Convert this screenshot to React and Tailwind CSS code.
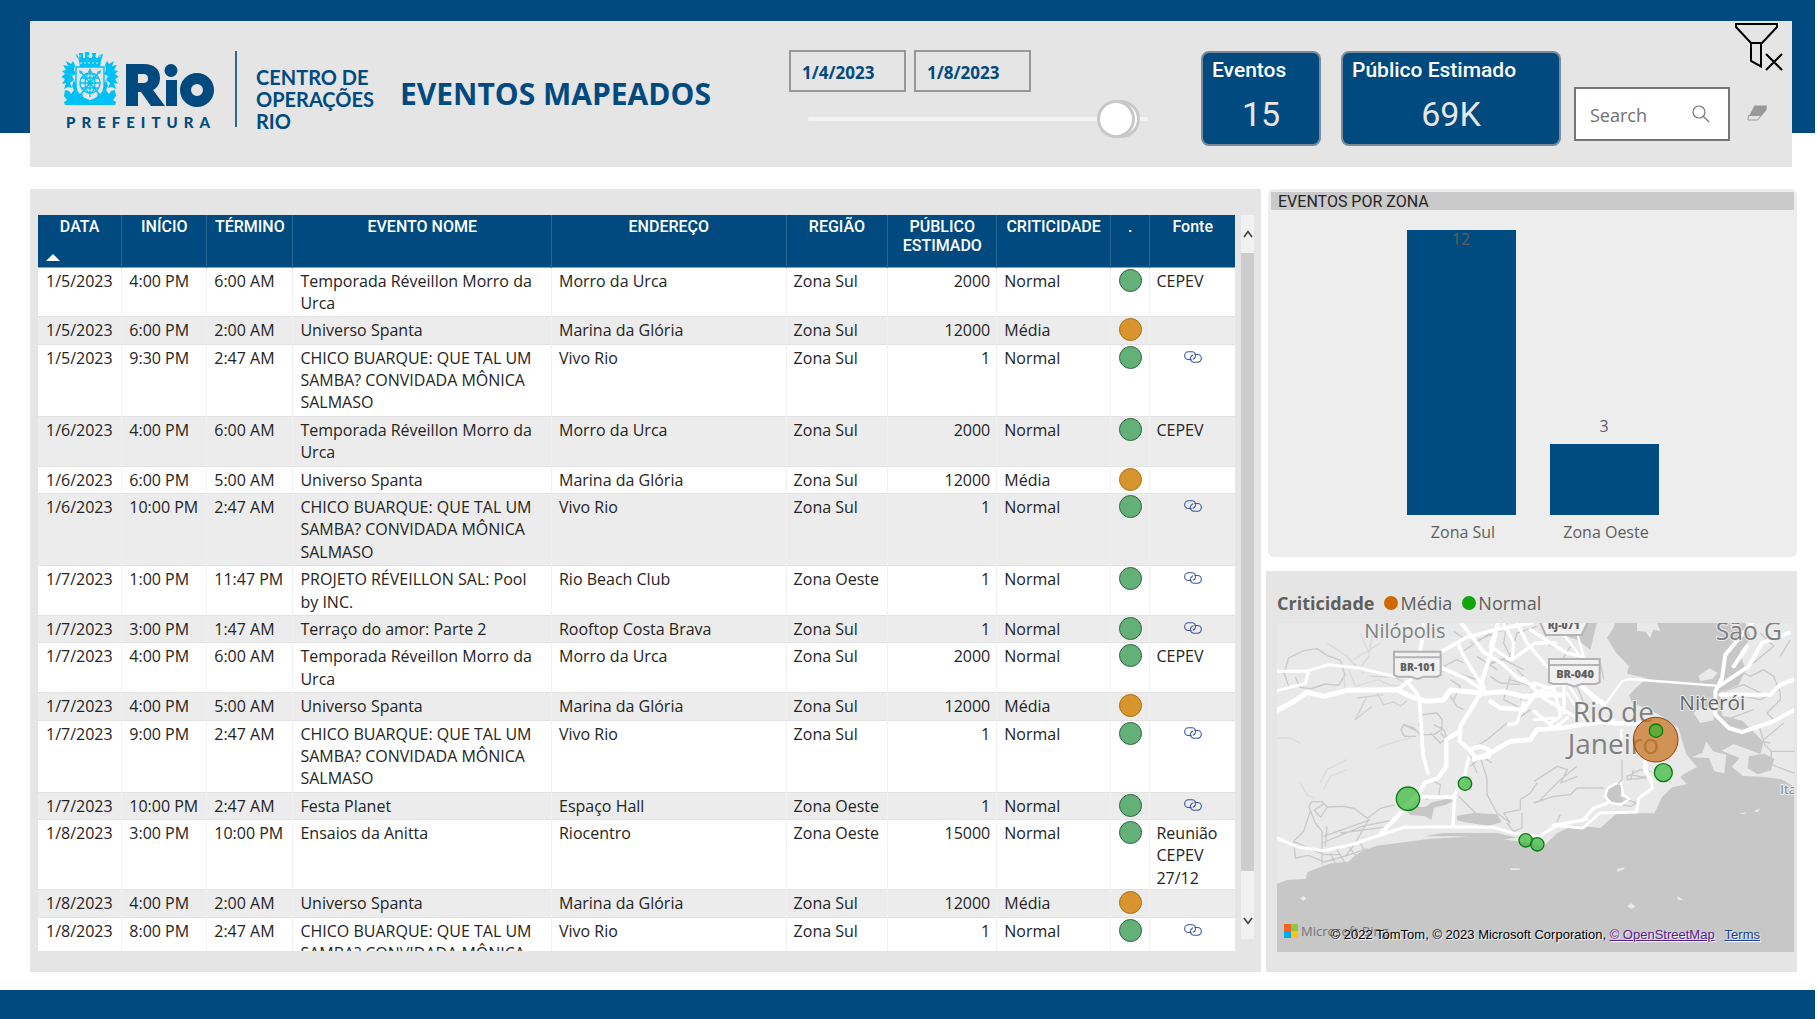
import React, { useState } from "react";

const NAMES = {
  reveillon: "Temporada Réveillon Morro da Urca",
  chico: "CHICO BUARQUE: QUE TAL UM SAMBA? CONVIDADA MÔNICA SALMASO",
};

const EVENTS = [
  ["1/5/2023", "4:00 PM", "6:00 AM", NAMES.reveillon, "Morro da Urca", "Zona Sul", 2000, "Normal", "CEPEV"],
  ["1/5/2023", "6:00 PM", "2:00 AM", "Universo Spanta", "Marina da Glória", "Zona Sul", 12000, "Média", ""],
  ["1/5/2023", "9:30 PM", "2:47 AM", NAMES.chico, "Vivo Rio", "Zona Sul", 1, "Normal", "link"],
  ["1/6/2023", "4:00 PM", "6:00 AM", NAMES.reveillon, "Morro da Urca", "Zona Sul", 2000, "Normal", "CEPEV"],
  ["1/6/2023", "6:00 PM", "5:00 AM", "Universo Spanta", "Marina da Glória", "Zona Sul", 12000, "Média", ""],
  ["1/6/2023", "10:00 PM", "2:47 AM", NAMES.chico, "Vivo Rio", "Zona Sul", 1, "Normal", "link"],
  ["1/7/2023", "1:00 PM", "11:47 PM", "PROJETO RÉVEILLON SAL: Pool by INC.", "Rio Beach Club", "Zona Oeste", 1, "Normal", "link"],
  ["1/7/2023", "3:00 PM", "1:47 AM", "Terraço do amor: Parte 2", "Rooftop Costa Brava", "Zona Sul", 1, "Normal", "link"],
  ["1/7/2023", "4:00 PM", "6:00 AM", NAMES.reveillon, "Morro da Urca", "Zona Sul", 2000, "Normal", "CEPEV"],
  ["1/7/2023", "4:00 PM", "5:00 AM", "Universo Spanta", "Marina da Glória", "Zona Sul", 12000, "Média", ""],
  ["1/7/2023", "9:00 PM", "2:47 AM", NAMES.chico, "Vivo Rio", "Zona Sul", 1, "Normal", "link"],
  ["1/7/2023", "10:00 PM", "2:47 AM", "Festa Planet", "Espaço Hall", "Zona Oeste", 1, "Normal", "link"],
  ["1/8/2023", "3:00 PM", "10:00 PM", "Ensaios da Anitta", "Riocentro", "Zona Oeste", 15000, "Normal", "Reunião CEPEV 27/12"],
  ["1/8/2023", "4:00 PM", "2:00 AM", "Universo Spanta", "Marina da Glória", "Zona Sul", 12000, "Média", ""],
  ["1/8/2023", "8:00 PM", "2:47 AM", NAMES.chico, "Vivo Rio", "Zona Sul", 1, "Normal", "link"],
];

const COLUMNS = [
  ["DATA", "w-[7%]"],
  ["INÍCIO", "w-[7.1%]"],
  ["TÉRMINO", "w-[7.2%]"],
  ["EVENTO NOME", "w-[21.6%]"],
  ["ENDEREÇO", "w-[19.6%]"],
  ["REGIÃO", "w-[8.5%]"],
  ["PÚBLICO ESTIMADO", "w-[9.1%]"],
  ["CRITICIDADE", "w-[9.5%]"],
  [".", "w-[3.3%]"],
  ["Fonte", "w-[7.1%]"],
];

const ZONES = [
  { name: "Zona Sul", total: 12 },
  { name: "Zona Oeste", total: 3 },
];

function Emblem() {
  return (
    <svg viewBox="0 0 56 54" className="h-[54px] w-14" aria-hidden="true">
      <g fill="#00c0f5">
        <path d="M15 3l2 7 1 6h20l1-6 2-7-4 1-1 3h-2V2h-4v5h-3V1h-4v6h-2V2h-4v5h-2l-1-3z" />
        <path d="M1 14l5 1-2-5 5 3 2-3 2 4-1 5 2 4-4 2 2 4-4 3 2 5-4-1-4 2 2-6-4 1 3-5-4-2 4-3-3-3 4-1z" />
        <path d="M55 14l-5 1 2-5-5 3-2-3-2 4 1 5-2 4 4 2-2 4 4 3-2 5 4-1 4 2-2-6 4 1-3-5 4-2-4-3 3-3-4-1z" />
        <path d="M12 29l3 6-1 5 6 5 6 3 2 3v3H3l-1-3 3-2-3-4 1-6 4 1 2 3 3-4-2-4z" />
        <path d="M44 29l-3 6 1 5-6 5-6 3-2 3v3h25l1-3-3-2 3-4-1-6-4 1-2 3-3-4 2-4z" />
      </g>
      <path d="M17 5h22M18 12h20" stroke="#e5e5e5" strokeWidth="1" strokeDasharray="2 2" />
      <path d="M14 16h28v20c0 7-6 11-14 14-8-3-14-7-14-14z" fill="#e5e5e5" stroke="#00c0f5" strokeWidth="1.4" />
      <g fill="none" stroke="#00c0f5" strokeWidth="1.3">
        <circle cx="28" cy="32" r="10" />
        <ellipse cx="28" cy="32" rx="5" ry="10" />
        <path d="M18 32h20M20 27h16M20 37h16M28 19v27M19 21l18 22M37 21L19 43" />
      </g>
      <path d="M28 17l2 4h-4zM17 19l4 2-3 2zM39 19l-4 2 3 2zM17 44l3-3 1 4zM39 44l-3-3-1 4z" fill="#00c0f5" />
      <circle cx="28" cy="32" r="2.6" fill="#00c0f5" />
    </svg>
  );
}

function Logo() {
  return (
    <div className="flex items-start text-[#004a80]">
      <div className="w-[152px]">
        <div className="flex h-14 items-start gap-2">
          <Emblem />
          <svg viewBox="0 0 88 44" className="mt-3 h-11 w-[88px]" role="img" aria-label="Rio">
            <path
              fillRule="evenodd"
              fill="#004a80"
              d="M0 1h18c10 0 16 5 16 14 0 6-3 10-7 12l12 16H25L15 29h-3v14H0zM12 11v9h5c3 0 5-1 5-4.500s-2-4.500-5-4.500z"
            />
            <circle cx="45" cy="7.500" r="6.500" fill="#004a80" />
            <path d="M40 17h11v26H40z" fill="#004a80" />
            <circle cx="71" cy="27" r="11.500" fill="none" stroke="#004a80" strokeWidth="11" />
          </svg>
        </div>
        <div className="pl-1 font-['Lato',sans-serif] text-[15px] leading-[30px] font-black tracking-[6px]">PREFEITURA</div>
      </div>
      <div className="ml-[21px] h-[76px] w-[2px] bg-[#2f6791]" />
      <div className="ml-[19px] pt-[15px] font-['Lato',sans-serif] text-[20px] leading-[22px] font-bold">
        CENTRO DE
        <br />
        OPERAÇÕES
        <br />
        RIO
      </div>
    </div>
  );
}

const RANGE =
  "pointer-events-none h-[38px] w-full appearance-none bg-transparent [&::-webkit-slider-thumb]:pointer-events-auto [&::-webkit-slider-thumb]:h-[38px] [&::-webkit-slider-thumb]:w-[38px] [&::-webkit-slider-thumb]:appearance-none [&::-webkit-slider-thumb]:rounded-full [&::-webkit-slider-thumb]:border-[3px] [&::-webkit-slider-thumb]:border-[#c8c8c8] [&::-webkit-slider-thumb]:bg-white";

function DateSlicer() {
  const [start, setStart] = useState("1/4/2023");
  const [end, setEnd] = useState("1/8/2023");
  const box =
    "h-[42px] w-[117px] border-2 border-[#979797] bg-transparent px-[11px] pt-[2px] text-[17px] font-bold text-[#004a80] outline-none";
  return (
    <div className="-mt-px w-[359px]">
      <div className="flex gap-2">
        <input aria-label="Data inicial" className={box} value={start} onChange={(e) => setStart(e.target.value)} />
        <input aria-label="Data final" className={box} value={end} onChange={(e) => setEnd(e.target.value)} />
      </div>
      <div className="relative mt-2 ml-[19px] flex h-[38px] items-center">
        <div className="h-1 w-full rounded-full bg-[#f3f2f1]" />
        <input type="range" aria-label="Fim do período" min="0" max="1000" defaultValue="972" className={`absolute inset-0 ${RANGE}`} />
        <input type="range" aria-label="Início do período" min="0" max="1000" defaultValue="958" className={`absolute inset-0 ${RANGE}`} />
      </div>
    </div>
  );
}

function Kpi({ label, value, width }) {
  return (
    <div
      className={`${width} h-[95px] rounded-lg border-2 border-[#7d8b98] bg-[#004a80] font-['Roboto',sans-serif] text-white`}
    >
      <div className="px-[9px] pt-[3px] text-[21px] leading-7 font-medium">{label}</div>
      <div className="pt-2 text-center text-[34px] leading-[44px] text-[#e6e6e6]">{value}</div>
    </div>
  );
}

function Header() {
  return (
    <header className="mr-[23px] ml-[30px] flex h-[146px] bg-[#e5e5e5] pt-[30px] pl-8">
      <Logo />
      <h1 className="ml-[26px] pt-7 text-[30px] leading-none font-bold whitespace-nowrap text-[#004a80]">EVENTOS MAPEADOS</h1>
      <div className="flex-1" />
      <DateSlicer />
      <div className="ml-[53px] flex gap-5">
        <Kpi label="Eventos" value="15" width="w-[120px]" />
        <Kpi label="Público Estimado" value="69K" width="w-[220px]" />
      </div>
      <label className="mt-9 ml-[13px] flex h-[54px] w-[156px] items-center border-2 border-[#767676] bg-white pr-[18px] pl-[14px]">
        <input type="search" aria-label="Search" placeholder="Search" className="w-full min-w-0 pt-[3px] text-[18px] outline-none placeholder:text-[#707070]" />
        <svg viewBox="0 0 18 18" className="h-[18px] w-[18px] shrink-0" fill="none" stroke="#777" strokeWidth="1.200">
          <circle cx="7" cy="7" r="6" />
          <path d="M11.500 11.500L17 17" />
        </svg>
      </label>
      <div className="-mt-7 mr-2 ml-1 flex w-[50px] flex-col">
        <button type="button" aria-label="Limpar filtros" className="h-[50px] w-[50px]">
          <svg viewBox="0 0 50 50" className="h-[50px] w-[50px]" fill="none" stroke="#000" strokeWidth="2">
            <path d="M2 1h41v3L28 20H17L2 4zM17 20v18l10 5.500V20" />
            <path d="M32 31l16 16M48 31L32 47" />
          </svg>
        </button>
        <button type="button" aria-label="Limpar pesquisa" className="mt-8 ml-[13px] h-4 w-5">
          <svg viewBox="0 0 20 16" className="h-4 w-5">
            <path d="M7.500.5H20l-.5 4.500-6 7H1.500z" fill="#999" />
            <path d="M1.500 10.500h10.500l1.500 1-3 3.500H1z" fill="#e5e5e5" stroke="#999" />
          </svg>
        </button>
      </div>
    </header>
  );
}

function LinkIcon() {
  return (
    <svg viewBox="0 0 18 12" className="mx-auto mt-1 h-3 w-[18px]" fill="none" stroke="#3a55a0" strokeWidth="1.100">
      <path d="M7.500 8.500H4.500A3.800 3.800 0 0 1 4.500.8h3.500a3.600 3.600 0 0 1 3.300 5.200c-.5 1.200-1.500 2-2.600 2.300" />
      <path d="M10.500 3.500h3A3.800 3.800 0 0 1 13.500 11.200h-3.500a3.600 3.600 0 0 1-3.300-5.200c.5-1.200 1.500-2 2.600-2.300" />
    </svg>
  );
}

function EventRow({ event }) {
  const [date, start, end, name, address, region, people, level, source] = event;
  const cell = "border-r border-[#f1f1f1] pr-[6px] pt-[2px] pb-[2px]";
  return (
    <tr className="border-b border-[#e3e3e3] bg-white align-top even:bg-[#ececec]">
      <td className={`${cell} pl-2 whitespace-nowrap`}>{date}</td>
      <td className={`${cell} pl-[7px] whitespace-nowrap`}>{start}</td>
      <td className={`${cell} pl-[7px] whitespace-nowrap`}>{end}</td>
      <td className={`${cell} pl-[7px]`}>{name}</td>
      <td className={`${cell} pl-[7px]`}>{address}</td>
      <td className={`${cell} pl-[7px] whitespace-nowrap`}>{region}</td>
      <td className={`${cell} text-right`}>{people}</td>
      <td className={`${cell} pl-[7px]`}>{level}</td>
      <td className="border-r border-[#f1f1f1] p-0 pt-px">
        <div
          className={`mx-auto h-[23px] w-[23px] rounded-full border ${
            level === "Média" ? "border-[#a86f14] bg-[#d8952e]" : "border-[#2f6340] bg-[#64b079]"
          }`}
        />
      </td>
      <td className="px-[6px] pt-[2px]">
        {source === "link" ? (
          <a href="#fonte" aria-label="Abrir fonte" className="block">
            <LinkIcon />
          </a>
        ) : (
          source
        )}
      </td>
    </tr>
  );
}

function EventTable() {
  return (
    <section className="flex min-h-0 bg-[#e5e5e5] pt-[26px] pr-[7px] pb-[21px] pl-2">
      <div className="min-h-0 flex-1 overflow-hidden">
        <table className="w-full table-fixed border-collapse text-[16px] leading-[1.4] text-[#252423]">
          <thead>
            <tr className="h-[52px] border-b border-[#7ea3c0] bg-[#004a80] align-top font-['Roboto',sans-serif] text-[16px] leading-[19px] text-white">
              {COLUMNS.map(([title, width], i) => (
                <th key={title} scope="col" className={`${width} border-r border-[#2a6693] px-1 pt-[2px] font-medium last:border-r-0`}>
                  {title}
                  {i === 0 && (
                    <svg viewBox="0 0 14 7" className="mt-[18px] ml-1 h-[7px] w-[14px]" aria-hidden="true">
                      <path d="M7 0l7 7H0z" fill="#fff" />
                    </svg>
                  )}
                </th>
              ))}
            </tr>
          </thead>
          <tbody>
            {EVENTS.map((event, i) => (
              <EventRow key={i} event={event} />
            ))}
          </tbody>
        </table>
      </div>
      <div className="mb-3 ml-[6px] flex w-[13px] flex-col bg-[#f1f1f1]">
        <button type="button" aria-label="Rolar para cima" className="flex h-[38px] items-center justify-center">
          <svg viewBox="0 0 10 8" className="h-2 w-[10px]" fill="none" stroke="#404040" strokeWidth="1.600">
            <path d="M1 7l4-5.500L9 7" />
          </svg>
        </button>
        <div className="flex-1">
          <div className="h-[95%] bg-[#cdcdcd]" />
        </div>
        <button type="button" aria-label="Rolar para baixo" className="flex h-9 items-center justify-center">
          <svg viewBox="0 0 10 8" className="h-2 w-[10px]" fill="none" stroke="#404040" strokeWidth="1.600">
            <path d="M1 1l4 5.500L9 1" />
          </svg>
        </button>
      </div>
    </section>
  );
}

function ZoneChart() {
  const max = 12;
  return (
    <section className="ml-[2px] flex h-[368px] flex-col rounded-md bg-[#ededed] px-[3px] pt-[3px]">
      <h2 className="bg-[#cacaca] pt-px pl-[7px] font-['Roboto',sans-serif] text-[16px] leading-[17px] text-[#252423]">EVENTOS POR ZONA</h2>
      <div className="mt-5 flex flex-1 justify-center gap-[34px] text-[16px] text-[#605e5c]">
        {ZONES.map((zone) => (
          <div key={zone.name} className="flex w-[109px] flex-col">
            <div className="flex h-[285px] flex-col justify-end">
              {zone.total !== max && <span className="pb-1 text-center leading-7">{zone.total}</span>}
              <div className="bg-[#004c80] text-center leading-[18px]" style={{ height: `${(zone.total / max) * 100}%` }}>
                {zone.total === max && zone.total}
              </div>
            </div>
            <span className="pt-[7px] pl-1 text-center leading-5">{zone.name}</span>
          </div>
        ))}
      </div>
    </section>
  );
}

function MapDrawing() {
  return (
    <svg viewBox="0 0 1551 987" preserveAspectRatio="xMidYMid slice" className="h-full w-full font-['Open_Sans',sans-serif]" role="img" aria-label="Mapa do Rio de Janeiro">
      <rect width="1551" height="987" fill="#e9e9e9" />
      <g fill="#c7c7c7">
        <path d="M0 782l30-11 55-3 7-20 30-13 40-14 52-5 22-20 26-14 38-14 80-10 80-11 100-5 100 4 60 9 80 14 40-38 50-24 80 8 50-44 112 0 24-50 30-28 44-9-20-22 12-10 38-20-32-38-24-80-60-40-80-36-8-22 24-24 30-26-60-14 6-22-40-42-26-44 20-30 8-30h380l24 60-34 44 8 24 10 30-22 44-54 22 6 70 60 15 30 30 34 34-10 36-80-30-36 20 54 22-24 26 34 28 56 2 60 8 40 24 42 28 40-16v487H0z" />
        <path d="M385 560l25-8 35 0 20-14 45-10 25 4-30 14-34 8-8 38-18-12-45-4zM540 578l50-8 70 4 14 24-40 10-70-10-24-6zM990 500l30-14 20 0-10 30 12 20-30 6-20-12zM1416 400l46-8 30 16-10 34-40 12-30-18zM440 640l60-10 160 0 60 14-50 6-120-10z" />
        <path d="M870 0h90l-10 40-10 40-40-30-30-10z" />
      </g>
      <g fill="#e9e9e9">
        <path d="M1080 0h60l10 24-22-4-8 26-14-20-26-2zM1264 158l34-22 24 14-16 18-36 6zM1250 270l24-22 36 14 0 30-40 8zM1288 355l20 30 40 10-6 56-30-6-16-40-50-2 30-14zM1020 738l24-6-6 8-18 6zM1200 818l18 12-14 2zM1050 850l12-9 14 9-12 8zM1386 572l24-4-8 6zM1430 564l20-8-8 12zM70 826l10-8 8 10-10 6zM700 736h28v5h-28z" />
        <path d="M975 168l20-24 22 6-18 12 16 24-44 10zM1164 440l32 0-16 12z" />
      </g>
      <g fill="none" stroke="#c9c9c9" strokeWidth="4" strokeLinejoin="round">
        <path d="M35 190l-14-40 14-45 45-22 40-6 30 20 40 15 14 45-20 30-40-4-40 14-35-4-14-30" />
        <path d="M200 150l4 45M215 140l20 50 40-12 30-8 30 15 50 5M205 95l40 45 30-40 10-60 40-40M230 110l80-50M250 30l26 60M150 60l60 40 50 50" stroke="#dadada" />
        <path d="M280 160l70 2 30 15M300 210l20 35 30-8 20 12 20-15M320 215l-80 10M270 220l-35 70 50-40" stroke="#d2d2d2" />
        <path d="M425 310l10-35 45-5 15 20 0 30-25 15-40 0-20-20-30-10-8 15 10 20 35 0M470 305l30 15 10 25-20 15-30-30M490 330l25 25M380 305l40 20" />
        <path d="M520 170l30 20-20 40M500 130l40-20 20 10M520 220l20 30 20 10" />
        <path d="M0 345l40 0 30 16M300 375l60-20 40-10M130 480l20-40 60-30M140 500l20-40 50-20M70 480l20 35 20 10" stroke="#dcdcdc" />
        <path d="M95 550l10-14 30 0 16 16 50-2 30 6 40 30 40-30 40-10M95 550l20 50 20 25 0 90M151 552l-20 30-20-20 30-20M135 625l0 100M100 565l-20 60-30 30 5 50 40-8 46 20 70-20 60-20M135 660l120-50 100-20M140 640l140-50M190 630l150-20M50 655l90 40 50 0M150 610l-5 60M275 590l-40 70-30 40M215 670l30 40M250 660l20 40M180 680l30 50M160 690l20 40" />
        <path d="M430 490l40-15 20 10-5 35-40 8M610 405l20 60 0 50 30 55 40 30-20-30 50-10 0-30 30-20 20-30M580 400l20 50M580 430l35-30 30 20M545 520l50 50 30 10M690 600l20 25 25-10 0-45" />
        <path d="M560 45l-30-20M580 60l100-40M690 0l-10 60 20 40-60 20M620 130l60-20 60 30M640 30l-90 60M600 100l60 40M540 150l60 20M700 100l20-70 60-20M720 140l60 60-50 30M700 160l-20 70 60 30M690 300l-60 50-40 25M720 290l40-30M700 170l60 20M640 160l30 20 60 5" />
        <path d="M771 475l70-45 30 10-20 40 50-20M790 530l60-60 50-40M770 540l60-20 50-5 20-20 80 0M850 575l-10 20M1035 410l0 60-20 20M1050 460l40-20 30 5-20 20-50 5zM1060 455l50 10M1070 440l-10 30M1020 520l60 20-20 10-30-5" />
        <path d="M980 170l-10-50-60-10M950 180l-30-30-30 10M920 240l-20-50-60-40M850 120l30-50M800 60l60 20" />
        <path d="M1380 140l40 20 40-20 30 20 20 50 0 20-40 40 20 20M1340 205l60-20 60 30 40-10M1360 260l40-40 50 10 40-20M1350 290l80-30M1450 30l40 40-60 50-80 30M1460 350l60-50M1448 315l15 50 20 20 0 40 68 25M1480 385l71 0M1420 350l60 10M1510 100l30-50" />
      </g>
      <g fill="none" stroke="#fff" strokeLinejoin="round" strokeLinecap="round">
        <path strokeWidth="9" d="M0 145h85l70-20 90 10 110 26M95 143l-10 38-85 22M0 645l60 26 80 12 90-20 90-30 60-20 150-2 120 2 60 18 80 10" />
        <path strokeWidth="15" d="M0 262l50-26 40-28 50 12 70-18 150-2 40 20 50 15 50-4 20-30 100 10 60-5 60 15 50-5 60 0" />
        <path strokeWidth="11" d="M390 175l25 30 12 20 6 90 5 80 15 55M360 200l40-28M430 80l6-30 4-50M495 135l70 30 50 35M495 85l70-40 90-25 110-20M545 65l15 35 60 95M553 0l70 90 50 30 50 45 48 25" />
        <path strokeWidth="13" d="M620 195l-30 50-40 65-2 45 30 25 30-10 28 10 0 20-40 5-18-25M548 325l-40 25 0 80-25 35-40 15-20 35-110 115M620 205l-5-30 28-90 20-85M640 235l30 20 70 5 36-50 60 0" />
        <path strokeWidth="14" d="M590 410l50-20 60-35 60-5 20-30 80-6 50-8 60-10 50 5 70 0" />
        <path strokeWidth="10" d="M575 405l-12 50-30 60-5 90M430 522h105M680 0l30 60-5 50 70-50 60 0M720 0l30 60 60 70 90 50 80 60M700 110l-60-40 20-60M771 180l60 20 20 80-30 20M771 210l90-30 0 90M771 265l60 50 40-30M740 240l-20 60-25 5M760 20l60 40 50 30 46 10M740 165l60 60 100 60" />
        <path strokeWidth="7" d="M830 0l50 60 30 40M900 30l20 70M870 180l60 90M920 190l60 60 15-20M995 230l40-55 20-7 80 6 180 14M910 190l50 50M870 210l50 80 90 0M1033 320l0 70M1033 480l5 35 20 12-25 18-30-5-20-20 10-25 26-14" />
        <path strokeWidth="14" d="M1105 410l0 30 16 30" />
        <path strokeWidth="9" d="M1121 470l5 25-40 30-8 42-110 3-50 45-90-8 90-15 30-35 50-20M781 642l60-35 90-20M771 290l60-5" />
        <path strokeWidth="12" d="M1315 205l20-40 10-70 50-60 30-35M1325 190l90-60 40-70 80-30M1315 205l0 70 40 40 40 12 90-30 66-35M1330 215l150 0 30-30 40-15M1370 130l40-60" />
      </g>
      <g className="fill-[#808080] stroke-[#ececec] [paint-order:stroke] [stroke-width:6px]" fontWeight="500">
        <text x="262" y="46" fontSize="60">Nilópolis</text>
        <text x="1316" y="50" fontSize="74">São G</text>
        <text x="887" y="298" fontSize="84">Rio de</text>
        <text x="872" y="392" fontSize="84">Janeiro</text>
        <text x="1207" y="260" fontSize="62" className="fill-[#666]">Niterói</text>
        <text x="1510" y="514" fontSize="40">Ita</text>
      </g>
      <g fill="#f1f1f1" stroke="#b3b3b3" strokeWidth="6">
        <path d="M351 86h140v70l-10 5h-40l-20 7-20-7h-40l-10-5zM351 103h140" />
        <path d="M816 108h152v70l-12 5h-42l-22 7-22-7h-42l-12-5zM816 126h152" />
        <path d="M786-10l20 46h108l22-46z" />
      </g>
      <g fill="#606060" fontWeight="800" fontSize="31" textAnchor="middle">
        <text x="422" y="144">BR-101</text>
        <text x="894" y="165" fontSize="33">BR-040</text>
        <text x="860" y="18">RJ-071</text>
      </g>
      <circle cx="1136" cy="350" r="67" fill="#c8721c" fillOpacity="0.72" stroke="#9a3c0a" strokeWidth="3" />
      <g fill="#2db52d" fillOpacity="0.68" stroke="#0a7a12" strokeWidth="4">
        <circle cx="1137" cy="323" r="20" />
        <circle cx="1159" cy="449" r="27" />
        <circle cx="564" cy="482" r="20" />
        <circle cx="393" cy="527" r="35" />
        <circle cx="746" cy="652" r="20" />
        <circle cx="781" cy="664" r="20" />
      </g>
    </svg>
  );
}

function LegendItem({ color, children }) {
  return (
    <span className="flex items-center gap-[2px]">
      <span className={`h-[14px] w-[14px] rounded-full ${color}`} />
      {children}
    </span>
  );
}

function MapPanel() {
  return (
    <section className="flex min-h-0 flex-1 flex-col bg-[#e5e5e5] pr-[3px] pb-5 pl-[11px]">
      <div className="flex h-[52px] items-center gap-[10px] pt-3 text-[18px] text-[#605e5c]">
        <strong className="font-bold">Criticidade</strong>
        <LegendItem color="bg-[#d06a00]">Média</LegendItem>
        <LegendItem color="bg-[#12a510]">Normal</LegendItem>
      </div>
      <div className="relative min-h-0 flex-1 overflow-hidden">
        <MapDrawing />
        <div className="absolute bottom-[11px] left-[7px] flex items-center gap-[3px] text-[13px] text-[#757575]">
          <span className="grid grid-cols-2">
            <span className="h-[7px] w-[7px] bg-[#f26522]" />
            <span className="h-[7px] w-[7px] bg-[#8dc63f]" />
            <span className="h-[7px] w-[7px] bg-[#00aeef]" />
            <span className="h-[7px] w-[7px] bg-[#ffc20e]" />
          </span>
          Microsoft Bing
        </div>
        <div className="absolute right-[34px] bottom-[7px] font-['Liberation_Sans',sans-serif] text-[13px] leading-5 whitespace-nowrap text-black [text-shadow:1px_1px_1px_#fff]">
          © 2022 TomTom, © 2023 Microsoft Corporation,{" "}
          <a href="#osm" className="text-[#551a8b] underline">© OpenStreetMap</a>
          <a href="#terms" className="ml-[10px] text-[#1a3f95] underline">Terms</a>
        </div>
      </div>
    </section>
  );
}

export default function App() {
  return (
    <div className="flex h-screen flex-col bg-white pr-[2px] font-['Open_Sans',sans-serif]">
      <div className="shrink-0 bg-[linear-gradient(#004a80_133px,#fff_133px)] pt-[21px]">
        <Header />
      </div>
      <main className="mt-[22px] mr-[18px] mb-[18px] ml-[30px] grid min-h-0 flex-1 grid-cols-[1231fr_531fr] grid-rows-[minmax(0,1fr)] gap-[5px]">
        <EventTable />
        <div className="flex min-h-0 flex-col gap-[14px]">
          <ZoneChart />
          <MapPanel />
        </div>
      </main>
      <footer className="h-[29px] shrink-0 bg-[#004a80]" />
    </div>
  );
}
